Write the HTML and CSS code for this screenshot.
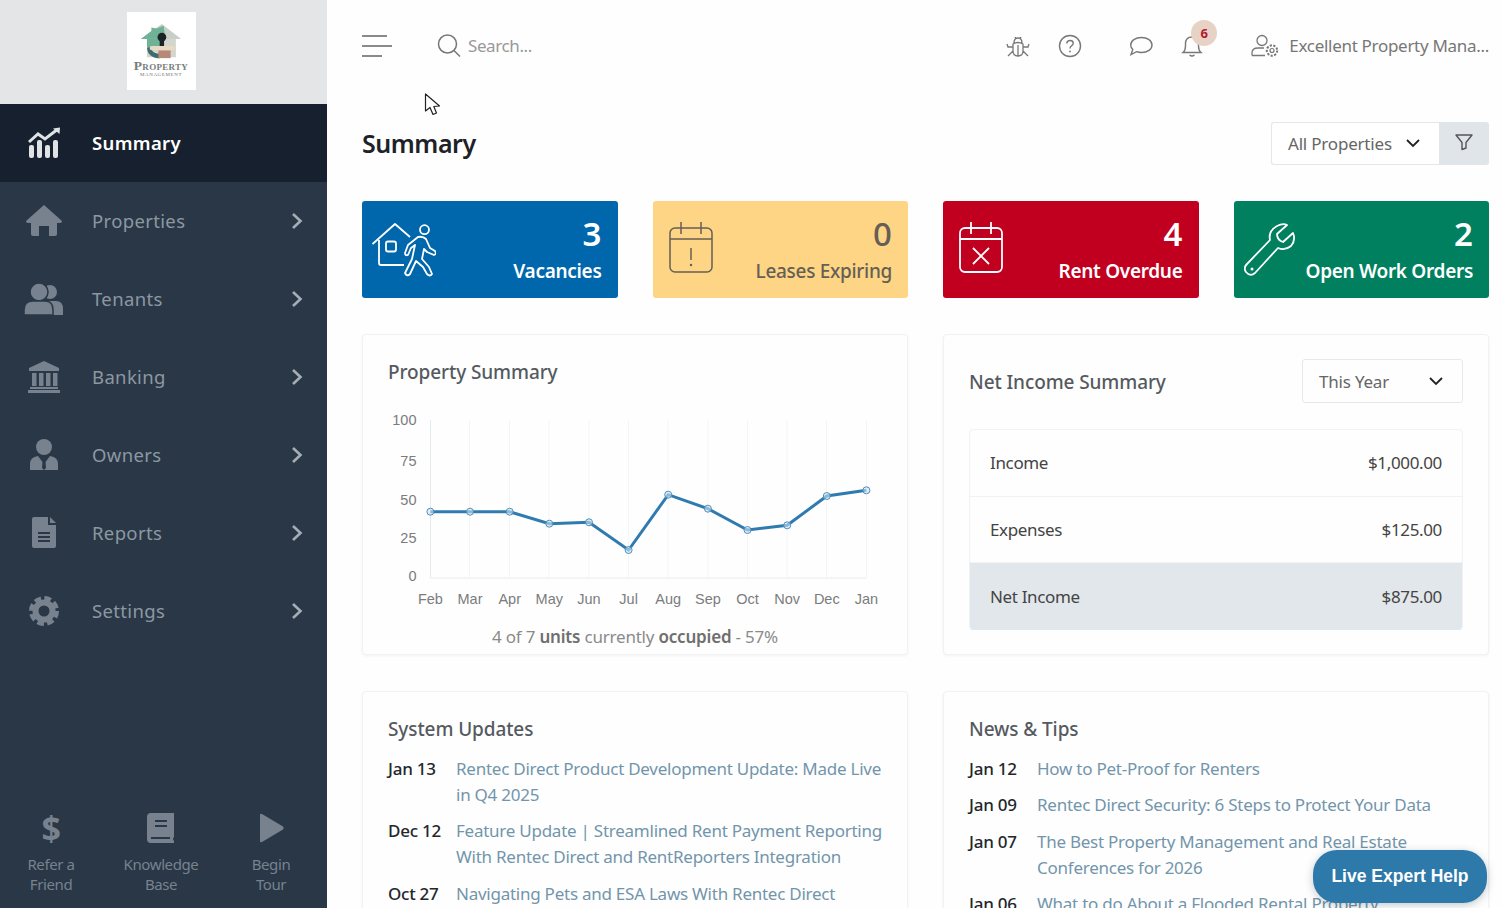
FILE: index.html
```html
<!doctype html>
<html>
<head>
    <meta charset="utf-8">
    <title>Summary</title>
    <link rel="stylesheet" href="styles.css">
</head>
<body>
<div class="app">
    <aside class="sidebar">
        <div class="logo-area">
            <div class="logo">
                <svg class="logo-mark" viewBox="0 0 48 40">
                    <path d="M1 17 L25 0 L47 17 Z" fill="#c9cfc6"/>
                    <path d="M1 17 L13 8 L13 4 L19 5 L27 2 L29 17 Z" fill="#6fb297"/>
                    <path d="M8 17 H41 V38 H8 Z" fill="#d3d6cc"/>
                    <path d="M8 17 H25 V27 H8 Z" fill="#6fb297"/>
                    <path d="M8 27 C9 38 18 39 23 39 L23 34 C16 34 13 31 13 26 Z" fill="#3d6c70"/>
                    <circle cx="25" cy="15" r="5" fill="#1c2226"/>
                    <rect x="22.500" y="16" width="5" height="12" fill="#1c2226"/>
                    <rect x="21" y="30" width="14" height="9" fill="#b78a78"/>
                    <rect x="11" y="25" width="29" height="5" rx="2.500" fill="#ead9c4"/>
                </svg>
                <div class="logo-name">Property</div>
                <div class="logo-sub">MANAGEMENT</div>
            </div>
        </div>
        <nav class="side-nav">
            <a class="nav-item active" href="#">
                <svg class="nav-icon" viewBox="0 0 40 32"><path d="M5 15 L14 7 L21 12 L34 2" fill="none" stroke="currentColor" stroke-width="3"/><path d="M29 1.500 L36 0.500 L35.500 7 Z" fill="currentColor"/><rect x="5" y="18" width="5" height="13" rx="2" fill="currentColor"/><rect x="13" y="13" width="5" height="18" rx="2" fill="currentColor"/><rect x="21" y="18" width="5" height="13" rx="2" fill="currentColor"/><rect x="29" y="13" width="5" height="18" rx="2" fill="currentColor"/></svg>
                <span class="nav-label">Summary</span>
            </a>
            <a class="nav-item" href="#">
                <svg class="nav-icon" viewBox="0 0 40 32"><path d="M20 0 L38 16 Q38 18 36 18 H33 V29 Q33 31 31 31 H25 V21 H15 V31 H9 Q7 31 7 29 V18 H4 Q2 18 2 16 Z" fill="currentColor"/></svg>
                <span class="nav-label">Properties</span>
                <svg class="nav-arrow" viewBox="0 0 12 18"><path d="M2 2 L9.500 9 L2 16" fill="none" stroke="currentColor" stroke-width="2.600"/></svg>
            </a>
            <a class="nav-item" href="#">
                <svg class="nav-icon" viewBox="0 0 40 32"><circle cx="26" cy="9" r="7" fill="currentColor"/><path d="M24 18 H32 Q39 18 39 26 V32 H28 Z" fill="currentColor"/><circle cx="15" cy="9" r="9" stroke="#293747" stroke-width="1.500" fill="currentColor"/><path d="M0 32 V27 Q0 18 9 18 H21 Q29 18 29 27 V32 Z" stroke="#293747" stroke-width="1.500" fill="currentColor"/></svg>
                <span class="nav-label">Tenants</span>
                <svg class="nav-arrow" viewBox="0 0 12 18"><path d="M2 2 L9.500 9 L2 16" fill="none" stroke="currentColor" stroke-width="2.600"/></svg>
            </a>
            <a class="nav-item" href="#">
                <svg class="nav-icon" viewBox="0 0 40 32"><path d="M20 0 L35 7 V10 H5 V7 Z" fill="currentColor"/><rect x="8" y="12" width="4.500" height="13" fill="currentColor"/><rect x="15" y="12" width="4.500" height="13" fill="currentColor"/><rect x="22" y="12" width="4.500" height="13" fill="currentColor"/><rect x="29" y="12" width="4.500" height="13" fill="currentColor"/><rect x="6" y="26" width="28" height="2" fill="currentColor"/><rect x="4" y="29" width="32" height="3" fill="currentColor"/></svg>
                <span class="nav-label">Banking</span>
                <svg class="nav-arrow" viewBox="0 0 12 18"><path d="M2 2 L9.500 9 L2 16" fill="none" stroke="currentColor" stroke-width="2.600"/></svg>
            </a>
            <a class="nav-item" href="#">
                <svg class="nav-icon" viewBox="0 0 40 32"><circle cx="20" cy="8" r="8" fill="currentColor"/><path d="M6 31 V25 Q6 18 14 17 L18.500 23 L18 29 L20 31 L22 29 L21.500 23 L26 17 Q34 18 34 25 V31 Z" fill="currentColor"/></svg>
                <span class="nav-label">Owners</span>
                <svg class="nav-arrow" viewBox="0 0 12 18"><path d="M2 2 L9.500 9 L2 16" fill="none" stroke="currentColor" stroke-width="2.600"/></svg>
            </a>
            <a class="nav-item" href="#">
                <svg class="nav-icon" viewBox="0 0 40 32"><path d="M10 0 H24 V8 H32 V29 Q32 31 30 31 H10 Q8 31 8 29 V2 Q8 0 10 0 Z" fill="currentColor"/><path d="M26 0 L32 6 H26 Z" fill="currentColor"/><path d="M14 16 H26 M14 20 H26 M14 24 H26" stroke="#293747" stroke-width="1.800"/></svg>
                <span class="nav-label">Reports</span>
                <svg class="nav-arrow" viewBox="0 0 12 18"><path d="M2 2 L9.500 9 L2 16" fill="none" stroke="currentColor" stroke-width="2.600"/></svg>
            </a>
            <a class="nav-item" href="#">
                <svg class="nav-icon" viewBox="0 0 40 32"><circle cx="20" cy="16" r="12.500" fill="none" stroke="currentColor" stroke-width="5" stroke-dasharray="6.500 3.320"/><circle cx="20" cy="16" r="8.500" fill="none" stroke="currentColor" stroke-width="6"/></svg>
                <span class="nav-label">Settings</span>
                <svg class="nav-arrow" viewBox="0 0 12 18"><path d="M2 2 L9.500 9 L2 16" fill="none" stroke="currentColor" stroke-width="2.600"/></svg>
            </a>
        </nav>
        <div class="side-links">
            <a class="side-link" href="#">
                <span class="dollar">$</span>
                <span>Refer a<br>Friend</span>
            </a>
            <a class="side-link" href="#">
                <svg class="side-icon" viewBox="0 0 30 32"><path d="M5 1 H28 V25 Q26 27 28 29 V31 H5 Q1 31 1 27 V5 Q1 1 5 1 Z" fill="currentColor"/><path d="M9 9 H21 M9 14 H21 M5 26 H24" stroke="#293747" stroke-width="2.200" fill="none"/></svg>
                <span>Knowledge<br>Base</span>
            </a>
            <a class="side-link" href="#">
                <svg class="side-icon" viewBox="0 0 30 32"><path d="M4 3 Q4 1 6 2 L27 14.500 Q28.500 16 27 17.500 L6 30 Q4 31 4 29 Z" fill="currentColor"/></svg>
                <span>Begin<br>Tour</span>
            </a>
        </div>
    </aside>

    <main class="main">
        <header class="topbar">
            <svg class="burger" viewBox="0 0 30 22" width="30" height="22"><path d="M0 1 H25 M0 11 H30 M0 21 H20" stroke="#8a8a8a" stroke-width="2" fill="none"/></svg>
            <div class="search">
                <svg viewBox="0 0 24 24" width="24" height="24"><circle cx="10.500" cy="10" r="9" fill="none" stroke="#777" stroke-width="1.500"/><path d="M17 16.500 L23 22.500" stroke="#777" stroke-width="1.500"/></svg>
                <span class="top-text">Search...</span>
            </div>
            <div class="top-icons">
                <svg class="top-icon bug" viewBox="0 0 24 24" width="24" height="24"><path d="M7 10 Q12 7 17 10 V17 Q17 22 12 22 Q7 22 7 17 Z M12 11 V22 M8 9 Q8 4 12 4 Q16 4 16 9 M9 3 L10 5 M15 3 L14 5 M7 13 H2 L1 10 M17 13 H22 L23 10 M7 17 L2 22 M17 17 L22 22" fill="none" stroke="#777" stroke-width="1.300"/></svg>
                <svg class="top-icon help" viewBox="0 0 24 24" width="24" height="24"><circle cx="12" cy="12" r="10.500" fill="none" stroke="#777" stroke-width="1.400"/><path d="M8.800 9.500 Q9 6.500 12 6.500 Q15.200 6.500 15.200 9.200 Q15.200 10.800 13.500 11.800 Q12 12.700 12 14.500" fill="none" stroke="#777" stroke-width="1.400"/><circle cx="12" cy="17.500" r="0.900" fill="#777"/></svg>
                <svg class="top-icon chat" viewBox="0 0 24 24" width="24" height="24"><path d="M12.500 3.500 C18.500 3.500 23 6.500 23 11 C23 15.500 18.500 18.500 12.500 18.500 C10.500 18.500 9 18.300 7.500 17.700 L2 20.500 L3.800 15.500 C2.500 14.300 1.700 12.800 1.700 11 C1.700 6.500 6.500 3.500 12.500 3.500 Z" fill="none" stroke="#777" stroke-width="1.400"/></svg>
                <div class="bell-wrap">
                    <svg viewBox="0 0 24 24" width="24" height="24"><path d="M3 18.500 Q5.500 16.500 5.500 12 V9.500 Q5.500 3 12 3 Q18.500 3 18.500 9.500 V12 Q18.500 16.500 21 18.500 Z M9.500 21 Q12 23 14.500 21" fill="none" stroke="#777" stroke-width="1.400"/></svg>
                    <span class="badge">6</span>
                </div>
                <svg class="top-icon user" viewBox="0 0 28 24" width="28" height="24"><circle cx="11" cy="6.500" r="5" fill="none" stroke="#777" stroke-width="1.300"/><path d="M1 21.500 V19 Q1 14 7 14 H13 M1 21.500 H14" fill="none" stroke="#777" stroke-width="1.300"/><circle cx="21" cy="16.500" r="5.200" fill="none" stroke="#777" stroke-width="2" stroke-dasharray="2.200 1.400"/><circle cx="21" cy="16.500" r="2" fill="none" stroke="#777" stroke-width="1.200"/></svg>
                <span class="company top-text">Excellent Property Mana...</span>
            </div>
        </header>

        <div class="page-head">
            <h1>Summary</h1>
            <div class="prop-filter">
                <div class="prop-select">
                    <span>All Properties</span>
                    <svg class="chev" viewBox="0 0 14 9" width="14" height="9"><path d="M1 1 L7 7 L13 1" fill="none" stroke="#222" stroke-width="1.800"/></svg>
                </div>
                <button class="filter-btn">
                    <svg viewBox="0 0 18 18" width="18" height="18"><path d="M1 2 H17 L11 9.500 V15 L7 16.500 V9.500 Z" fill="none" stroke="#555" stroke-width="1.400" stroke-linejoin="round"/></svg>
                </button>
            </div>
        </div>

        <section class="stats">
            <div class="stat stat-blue">
                <svg class="stat-icon vac" viewBox="0 0 64 54" width="64" height="54"><g fill="none" stroke="currentColor" stroke-width="1.800" stroke-linejoin="round"><path d="M0.500 21 L23 1 L38 14"/><path d="M7 17 V40 Q7 42 9 42 H32"/><rect x="14" y="18.500" width="10" height="10" rx="2"/><circle cx="52.500" cy="6.700" r="4.500"/><path d="M46 14 Q51 13 54 16 L58 25 L63 28 Q65 31 62 32 L55 29 L52 26 L50 36 L57 44 L60 51 Q58 54 55 51 L51 44 L44 38 L38 51 Q35 54 33 50 L40 36 L43 22 L39 25 L36 32 Q33 33 33 30 L36 22 Z"/></g></svg>
                <div class="stat-text"><div class="stat-num">3</div><div class="stat-label">Vacancies</div></div>
            </div>
            <div class="stat stat-yellow">
                <svg class="stat-icon cal" viewBox="0 0 46 52" width="46" height="52"><g fill="none" stroke="currentColor" stroke-width="1.500"><rect x="2" y="7" width="42" height="44" rx="5"/><path d="M2 18 H44 M13 1 V13 M33 1 V13"/><path d="M23 27 V39"/></g><circle cx="23" cy="44" r="1.200" fill="currentColor"/></svg>
                <div class="stat-text"><div class="stat-num">0</div><div class="stat-label">Leases Expiring</div></div>
            </div>
            <div class="stat stat-red">
                <svg class="stat-icon cal" viewBox="0 0 46 52" width="46" height="52"><g fill="none" stroke="currentColor" stroke-width="1.800"><rect x="2" y="7" width="42" height="44" rx="5"/><path d="M2 18 H44 M13 1 V13 M33 1 V13"/><path d="M15 27 L31 43 M31 27 L15 43"/></g></svg>
                <div class="stat-text"><div class="stat-num">4</div><div class="stat-label">Rent Overdue</div></div>
            </div>
            <div class="stat stat-green">
                <svg class="stat-icon wrench" viewBox="0 0 52 54" width="52" height="54"><path d="M33 3 Q39 0 43 2 L33 11 Q33 17 39 19 L49 10 Q52 17 47 23 Q41 28 34 25 L11 50 Q6 54 2 49 Q-1 45 3 41 L26 17 Q24 8 33 3 Z" fill="none" stroke="currentColor" stroke-width="1.800" stroke-linejoin="round"/><circle cx="8" cy="46" r="1.500" fill="currentColor"/></svg>
                <div class="stat-text"><div class="stat-num">2</div><div class="stat-label">Open Work Orders</div></div>
            </div>
        </section>

        <section class="panels">
            <div class="panel">
                <h2>Property Summary</h2>
                <svg class="chart" viewBox="388 400 494 222" width="494" height="222">
                    <g stroke="#f3f5f6" stroke-width="1">
                        <path d="M469.500 420 V578 M509.500 420 V578 M549 420 V578 M589 420 V578 M628.500 420 V578 M668 420 V578 M708 420 V578 M747.500 420 V578 M787 420 V578 M826.500 420 V578 M866.500 420 V578"/>
                    </g>
                    <path d="M430.500 420 V578 H866.500" fill="none" stroke="#e6eaed" stroke-width="1"/>
                    <polyline points="430.400,511.700 470,511.700 509.700,511.700 549.300,523.700 589,522.300 628.600,550 668.200,494.700 707.900,508.700 747.500,530 787.200,525.300 826.800,496 866.400,490.300" fill="none" stroke="#2f7bb0" stroke-width="3"/>
                    <g fill="#cfe2ef" fill-opacity="0.6" stroke="#4d8fbd" stroke-width="1">
                        <circle cx="430.400" cy="511.700" r="3.500"/><circle cx="470" cy="511.700" r="3.500"/><circle cx="509.700" cy="511.700" r="3.500"/><circle cx="549.300" cy="523.700" r="3.500"/><circle cx="589" cy="522.300" r="3.500"/><circle cx="628.600" cy="550" r="3.500"/><circle cx="668.200" cy="494.700" r="3.500"/><circle cx="707.900" cy="508.700" r="3.500"/><circle cx="747.500" cy="530" r="3.500"/><circle cx="787.200" cy="525.300" r="3.500"/><circle cx="826.800" cy="496" r="3.500"/><circle cx="866.400" cy="490.300" r="3.500"/>
                    </g>
                    <g class="axis-y" text-anchor="end">
                        <text x="416.500" y="425">100</text><text x="416.500" y="466">75</text><text x="416.500" y="505">50</text><text x="416.500" y="543">25</text><text x="416.500" y="581">0</text>
                    </g>
                    <g class="axis-x" text-anchor="middle">
                        <text x="430.400" y="604">Feb</text><text x="470" y="604">Mar</text><text x="509.700" y="604">Apr</text><text x="549.300" y="604">May</text><text x="589" y="604">Jun</text><text x="628.600" y="604">Jul</text><text x="668.200" y="604">Aug</text><text x="707.900" y="604">Sep</text><text x="747.500" y="604">Oct</text><text x="787.200" y="604">Nov</text><text x="826.800" y="604">Dec</text><text x="866.400" y="604">Jan</text>
                    </g>
                </svg>
                <p class="chart-caption">4 of 7 <b>units</b> currently <b>occupied</b> - 57%</p>
            </div>

            <div class="panel">
                <div class="panel-head">
                    <h2 class="net-title">Net Income Summary</h2>
                    <div class="year-select">
                        <span>This Year</span>
                        <svg class="chev" viewBox="0 0 14 9" width="14" height="9"><path d="M1 1 L7 7 L13 1" fill="none" stroke="#222" stroke-width="1.800"/></svg>
                    </div>
                </div>
                <div class="income-table">
                    <div class="income-row"><span>Income</span><span>$1,000.00</span></div>
                    <div class="income-row"><span>Expenses</span><span>$125.00</span></div>
                    <div class="income-row total"><span>Net Income</span><span>$875.00</span></div>
                </div>
            </div>

            <div class="panel">
                <h2>System Updates</h2>
                <ul class="feed">
                    <li><span class="feed-date">Jan 13</span><a href="#">Rentec Direct Product Development Update: Made Live in Q4 2025</a></li>
                    <li><span class="feed-date">Dec 12</span><a href="#">Feature Update | Streamlined Rent Payment Reporting With Rentec Direct and RentReporters Integration</a></li>
                    <li><span class="feed-date">Oct 27</span><a href="#">Navigating Pets and ESA Laws With Rentec Direct</a></li>
                </ul>
            </div>

            <div class="panel">
                <h2>News &amp; Tips</h2>
                <ul class="feed">
                    <li><span class="feed-date">Jan 12</span><a href="#">How to Pet-Proof for Renters</a></li>
                    <li><span class="feed-date">Jan 09</span><a href="#">Rentec Direct Security: 6 Steps to Protect Your Data</a></li>
                    <li><span class="feed-date">Jan 07</span><a href="#">The Best Property Management and Real Estate Conferences for 2026</a></li>
                    <li><span class="feed-date">Jan 06</span><a href="#">What to do About a Flooded Rental Property</a></li>
                </ul>
            </div>
        </section>
    </main>
</div>

<a class="live-help" href="#">Live Expert Help</a>
<svg class="cursor" viewBox="0 0 18 24" width="18" height="24"><path d="M1.500 1 L1.500 18 L6 14.500 L9 21.500 L12.500 20 L9.800 13.500 L15.500 13 Z" fill="#fff" stroke="#222" stroke-width="1.200" stroke-linejoin="round"/></svg>
</body>
</html>
```

FILE: styles.css
```css
html {
    background: #fefefe;
}

body {
    margin: 0;
    height: 908px;
    overflow: hidden;
    font-family: "Noto Sans", "Open Sans", sans-serif;
    color: #444;
}

a {
    text-decoration: none;
}

.app {
    display: flex;
    height: 908px;
    overflow: hidden;
}

/* sidebar */
.sidebar {
    width: 327px;
    flex: none;
    display: flex;
    flex-direction: column;
    background: #293747;
}

.logo-area {
    height: 104px;
    display: flex;
    justify-content: center;
    padding-top: 12px;
    box-sizing: border-box;
    background: #e3e5e7;
    padding-right: 5px;
}

.logo {
    width: 69px;
    height: 78px;
    background: #fff;
    display: flex;
    flex-direction: column;
    align-items: center;
    padding-top: 12px;
    box-sizing: border-box;
}

.logo-mark {
    width: 42px;
    height: 35px;
    flex: none;
}

.logo-name {
    font-family: "Liberation Serif", serif;
    font-variant: small-caps;
    font-size: 13.500px;
    line-height: 13px;
    font-weight: 700;
    letter-spacing: 0.3px;
    color: #777e7a;
}

.logo-sub {
    font-family: "Liberation Serif", serif;
    font-size: 5px;
    line-height: 6px;
    letter-spacing: 0.6px;
    color: #6f7672;
}

.nav-item {
    height: 78px;
    display: flex;
    align-items: center;
    padding: 0 24px;
    color: #77828e;
}

.nav-item.active {
    background: #17202f;
    color: #dfe3e6;
}

.nav-icon {
    width: 40px;
    height: 32px;
    flex: none;
}

.nav-label {
    margin-left: 28px;
    padding-bottom: 2px;
    flex: 1;
    font-size: 18.500px;
    letter-spacing: 0.35px;
    color: #8d97a2;
}

.active .nav-label {
    color: #fff;
    font-weight: 600;
}

.nav-arrow {
    width: 12px;
    height: 18px;
    color: #a5adb5;
}

.side-links {
    margin-top: auto;
    padding: 0 5px 14px 0;
    display: flex;
    justify-content: center;
}

.side-link {
    width: 110px;
    flex: none;
    display: flex;
    flex-direction: column;
    align-items: center;
    text-align: center;
    font-size: 15px;
    line-height: 20px;
    letter-spacing: -0.4px;
    color: #77828e;
}

.side-icon {
    width: 30px;
    height: 32px;
    margin-bottom: 10px;
}

.dollar {
    height: 32px;
    margin-bottom: 10px;
    font-size: 34px;
    line-height: 32px;
    font-weight: 700;
}

/* main column */
.main {
    flex: 1;
    min-width: 0;
    padding: 0 13px 0 35px;
}

.topbar {
    height: 92px;
    display: flex;
    align-items: center;
}

.burger {
    flex: none;
}

.search {
    margin-left: 45px;
    display: flex;
    align-items: center;
    gap: 7px;
    font-size: 17px;
    letter-spacing: -0.4px;
    color: #999;
}

.top-text {
    padding-bottom: 2px;
}

.top-icons {
    margin-left: auto;
    display: flex;
    align-items: center;
}

.top-icon {
    flex: none;
}

.help {
    margin-left: 28px;
}

.chat {
    margin-left: 47px;
}

.bell-wrap {
    position: relative;
    margin-left: 27px;
    width: 24px;
    height: 24px;
}

.badge {
    position: absolute;
    left: 11px;
    top: -14px;
    width: 26px;
    height: 26px;
    border-radius: 50%;
    background: #e8d2c6;
    color: #b2182f;
    font-size: 13px;
    font-weight: 700;
    line-height: 26px;
    text-align: center;
}

.user {
    margin-left: 47px;
}

.company {
    margin-left: 10px;
    font-size: 17px;
    letter-spacing: -0.3px;
    color: #777;
    white-space: nowrap;
}

.page-head {
    margin-top: 30px;
    height: 43px;
    display: flex;
    align-items: center;
    justify-content: space-between;
}

h1 {
    margin: 0 0 2px;
    font-size: 25px;
    font-weight: 600;
    letter-spacing: -0.45px;
    color: #1d2128;
}

.prop-filter {
    display: flex;
    height: 43px;
}

.prop-select {
    width: 168px;
    box-sizing: border-box;
    border: 1px solid #e4e6e8;
    border-right: 0;
    border-radius: 3px 0 0 3px;
    background: #fff;
    padding: 0 19px 0 16px;
    display: flex;
    align-items: center;
    justify-content: space-between;
    font-size: 17px;
    letter-spacing: -0.2px;
    color: #666;
}

.filter-btn {
    width: 50px;
    border: 0;
    border-radius: 0 3px 3px 0;
    background: #e0e5e9;
    padding: 0;
}

.stats {
    margin-top: 36px;
    display: grid;
    grid-template-columns: repeat(4, 1fr);
    gap: 35px;
}

.stat {
    height: 97px;
    border-radius: 3px;
    display: flex;
    align-items: center;
    justify-content: space-between;
    padding: 0 16px 0 10px;
    color: #fff;
}

.stat-blue {
    background: #0067ac;
}

.stat-yellow {
    background: #fdd585;
    color: #655f55;
}

.stat-red {
    background: #c1001f;
}

.stat-green {
    background: #00805f;
}

.stat-icon {
    flex: none;
}

.stat-icon.cal {
    margin: 0 0 5px 5px;
}

.stat-text {
    text-align: right;
    padding-bottom: 4px;
}

.stat-num {
    font-size: 33px;
    line-height: 46px;
    font-weight: 600;
}

.stat-label {
    font-size: 19px;
    line-height: 28px;
    font-weight: 600;
    letter-spacing: -0.3px;
    white-space: nowrap;
}

.stat-yellow .stat-label,
.stat-yellow .stat-num {
    font-weight: 500;
}

.panels {
    margin-top: 36px;
    display: grid;
    grid-template-columns: 1fr 1fr;
    grid-template-rows: 321px auto;
    gap: 36px 35px;
}

.panel {
    border: 1px solid #f1f2f4;
    border-radius: 4px;
    box-shadow: 0 1px 3px rgba(30, 40, 50, 0.05);
    background: #fefefe;
    padding: 24px 25px;
    min-width: 0;
}

h2 {
    margin: 0;
    font-size: 19px;
    line-height: 26px;
    font-weight: 500;
    letter-spacing: -0.1px;
    color: #555a60;
}

.net-title {
    padding-top: 2px;
}

.chart {
    display: block;
    margin-top: 15px;
}

.axis-y text,
.axis-x text {
    font-family: "Liberation Sans", sans-serif;
    font-size: 14.500px;
    fill: #7c7c7c;
}

.chart-caption {
    margin: 2px 0 0;
    font-size: 17px;
    line-height: 26px;
    letter-spacing: -0.2px;
    text-align: center;
    color: #8a8a8a;
}

.chart-caption b {
    font-weight: 600;
    color: #6f6f6f;
}

.panel-head {
    display: flex;
    align-items: center;
    justify-content: space-between;
}

.year-select {
    width: 161px;
    height: 44px;
    box-sizing: border-box;
    border: 1px solid #e6e8ea;
    border-radius: 3px;
    padding: 0 19px 0 16px;
    display: flex;
    align-items: center;
    justify-content: space-between;
    font-size: 17px;
    letter-spacing: -0.2px;
    color: #666;
}

.income-table {
    margin-top: 26px;
    border-radius: 4px;
    overflow: hidden;
    border: 1px solid #f1f2f4;
    border-bottom: 0;
}

.income-row {
    height: 66.700px;
    display: flex;
    align-items: center;
    justify-content: space-between;
    padding: 0 20px;
    font-size: 17px;
    letter-spacing: -0.35px;
    color: #444;
    border-bottom: 1px solid #f1f2f4;
    box-sizing: border-box;
}

.income-row.total {
    background: #e2e7eb;
    border-bottom: 0;
}

.feed {
    list-style: none;
    margin: 14px -6px 0 0;
    padding: 0;
}

.feed li {
    display: flex;
    margin-bottom: 10.400px;
    font-size: 17px;
    line-height: 26px;
    letter-spacing: -0.25px;
}

.feed-date {
    width: 68px;
    flex: none;
    font-weight: 500;
    color: #23272c;
}

.feed a {
    color: #7295ab;
}

/* floating bits */
.live-help {
    position: absolute;
    left: 1313px;
    top: 850px;
    width: 174px;
    height: 53px;
    border-radius: 24px;
    background: #2d79a9;
    box-shadow: 0 2px 8px rgba(20, 40, 60, 0.25);
    color: #fff;
    font-family: "Liberation Sans", sans-serif;
    font-size: 17.500px;
    font-weight: 700;
    line-height: 52px;
    text-align: center;
}

.cursor {
    position: absolute;
    left: 424px;
    top: 93px;
}
```
